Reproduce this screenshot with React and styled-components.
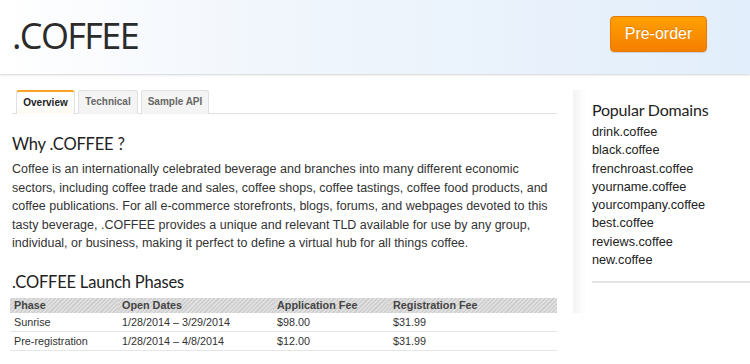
import React from "react";
import styled, { createGlobalStyle } from "styled-components";

const GlobalStyle = createGlobalStyle`
  html, body {
    margin: 0;
    padding: 0;
    background: #ffffff;
    font-family: "Liberation Sans", Arial, sans-serif;
    color: #333;
  }
`;

const Page = styled.div`
  width: 750px;
  height: 364px;
  overflow: hidden;
  background: #fff;
`;

const Header = styled.header`
  height: 74px;
  display: flex;
  align-items: center;
  justify-content: space-between;
  padding: 0 43px 0 12px;
  background: linear-gradient(to right, #ffffff 0%, #f1f6fc 35%, #e2eefb 100%);
  box-shadow: 0 1px 2px rgba(0, 0, 0, 0.18);
  position: relative;
  z-index: 1;
`;

const Title = styled.h1`
  margin: 0 0 4px 0;
  font-family: "Open Sans", "DejaVu Sans", sans-serif;
  font-weight: 400;
  font-size: 36px;
  letter-spacing: -1.6px;
  color: #2b2b2b;
`;

const PreOrder = styled.button`
  width: 97px;
  height: 36px;
  margin-top: -6px;
  border: 1px solid #e87a00;
  border-radius: 4px;
  background: linear-gradient(to bottom, #ffa000 0%, #f57f00 100%);
  color: #fff;
  font-family: "Liberation Sans", Arial, sans-serif;
  font-size: 16px;
  text-shadow: 0 -1px 0 rgba(160, 70, 0, 0.35);
  box-shadow: 0 1px 1px rgba(0, 0, 0, 0.12);
  cursor: pointer;
`;

const Body = styled.div`
  display: flex;
  align-items: flex-start;
`;

const Main = styled.main`
  width: 545px;
  margin-left: 12px;
  padding-top: 16px;
`;

const Tabs = styled.ul`
  display: flex;
  gap: 3px;
  margin: 0;
  padding: 0 0 0 4px;
  list-style: none;
  border-bottom: 1px solid #e2e2e2;
`;

const Tab = styled.li`
  height: 24px;
  line-height: 22px;
  width: ${(p) => p.$w}px;
  box-sizing: border-box;
  text-align: center;
  font-size: 10px;
  font-weight: 700;
  color: ${(p) => (p.$active ? "#222" : "#666")};
  background: ${(p) =>
    p.$active ? "linear-gradient(to bottom, #fff 0%, #fff 60%, #fdf8ef 100%)" : "#f4f4f4"};
  border: 1px solid #e0e0e0;
  border-top: ${(p) => (p.$active ? "2px solid #f5a623" : "1px solid #e0e0e0")};
  border-bottom: none;
  border-radius: 3px 3px 0 0;
  margin-bottom: -1px;
`;

const SectionTitle = styled.h2`
  margin: ${(p) => p.$mt}px 0 0 0;
  font-family: Lato, "Open Sans", sans-serif;
  font-weight: 400;
  font-size: 16.5px;
  letter-spacing: -0.2px;
  line-height: 22px;
  color: #222;
`;

const Paragraph = styled.p`
  margin: 5px 0 0 0;
  font-size: 12.5px;
  line-height: 18.5px;
  color: #333;
`;

const Table = styled.table`
  width: 547px;
  margin: 5px 0 0 -2px;
  border-collapse: collapse;
  font-size: 10.8px;
`;

const HeadCell = styled.th`
  text-align: left;
  font-weight: 700;
  color: #444;
  height: 15px;
  padding: 0 4px;
  background: repeating-linear-gradient(
    -45deg,
    #cfcfcf 0px,
    #cfcfcf 1.5px,
    #e0e0e0 1.5px,
    #e0e0e0 3px
  );
  width: ${(p) => p.$w}px;
`;

const Cell = styled.td`
  height: 18px;
  padding: 0 4px;
  color: #333;
  border-bottom: 1px solid #e6e6e6;
`;

const Sidebar = styled.aside`
  margin: 16px 0 0 16px;
  width: 158px;
  padding: 10px 0 30px 19px;
  background: linear-gradient(to right, rgba(0, 0, 0, 0.05) 0px, rgba(0, 0, 0, 0.015) 8px, rgba(255, 255, 255, 0) 14px);
`;

const SideTitle = styled.h3`
  margin: 0;
  font-family: Lato, "Open Sans", sans-serif;
  font-weight: 400;
  font-size: 16px;
  letter-spacing: -0.2px;
  line-height: 20px;
  color: #222;
`;

const DomainList = styled.ul`
  margin: 3px 0 0 0;
  padding: 0 0 12px 0;
  list-style: none;
  border-bottom: 2px solid #e4e4e4;
`;

const Domain = styled.li`
  font-size: 12.7px;
  line-height: 18.3px;
  color: #222;
`;

const domains = [
  "drink.coffee",
  "black.coffee",
  "frenchroast.coffee",
  "yourname.coffee",
  "yourcompany.coffee",
  "best.coffee",
  "reviews.coffee",
  "new.coffee",
];

const phases = [
  ["Sunrise", "1/28/2014 \u2013 3/29/2014", "$98.00", "$31.99"],
  ["Pre-registration", "1/28/2014 \u2013 4/8/2014", "$12.00", "$31.99"],
];

export default function App() {
  return (
    <Page>
      <GlobalStyle />
      <Header>
        <Title>.COFFEE</Title>
        <PreOrder>Pre-order</PreOrder>
      </Header>
      <Body>
        <Main>
          <Tabs>
            <Tab $active $w={59}>Overview</Tab>
            <Tab $w={60}>Technical</Tab>
            <Tab $w={68}>Sample API</Tab>
          </Tabs>
          <SectionTitle $mt={19}>Why .COFFEE ?</SectionTitle>
          <Paragraph>
            Coffee is an internationally celebrated beverage and branches into many different economic
            sectors, including coffee trade and sales, coffee shops, coffee tastings, coffee food products, and
            coffee publications. For all e-commerce storefronts, blogs, forums, and webpages devoted to this
            tasty beverage, .COFFEE provides a unique and relevant TLD available for use by any group,
            individual, or business, making it perfect to define a virtual hub for all things coffee.
          </Paragraph>
          <SectionTitle $mt={18}>.COFFEE Launch Phases</SectionTitle>
          <Table>
            <thead>
              <tr>
                <HeadCell $w={100}>Phase</HeadCell>
                <HeadCell $w={147}>Open Dates</HeadCell>
                <HeadCell $w={108}>Application Fee</HeadCell>
                <HeadCell>Registration Fee</HeadCell>
              </tr>
            </thead>
            <tbody>
              {phases.map((row) => (
                <tr key={row[0]}>
                  {row.map((c, i) => (
                    <Cell key={i}>{c}</Cell>
                  ))}
                </tr>
              ))}
            </tbody>
          </Table>
        </Main>
        <Sidebar>
          <SideTitle>Popular Domains</SideTitle>
          <DomainList>
            {domains.map((d) => (
              <Domain key={d}>{d}</Domain>
            ))}
          </DomainList>
        </Sidebar>
      </Body>
    </Page>
  );
}
